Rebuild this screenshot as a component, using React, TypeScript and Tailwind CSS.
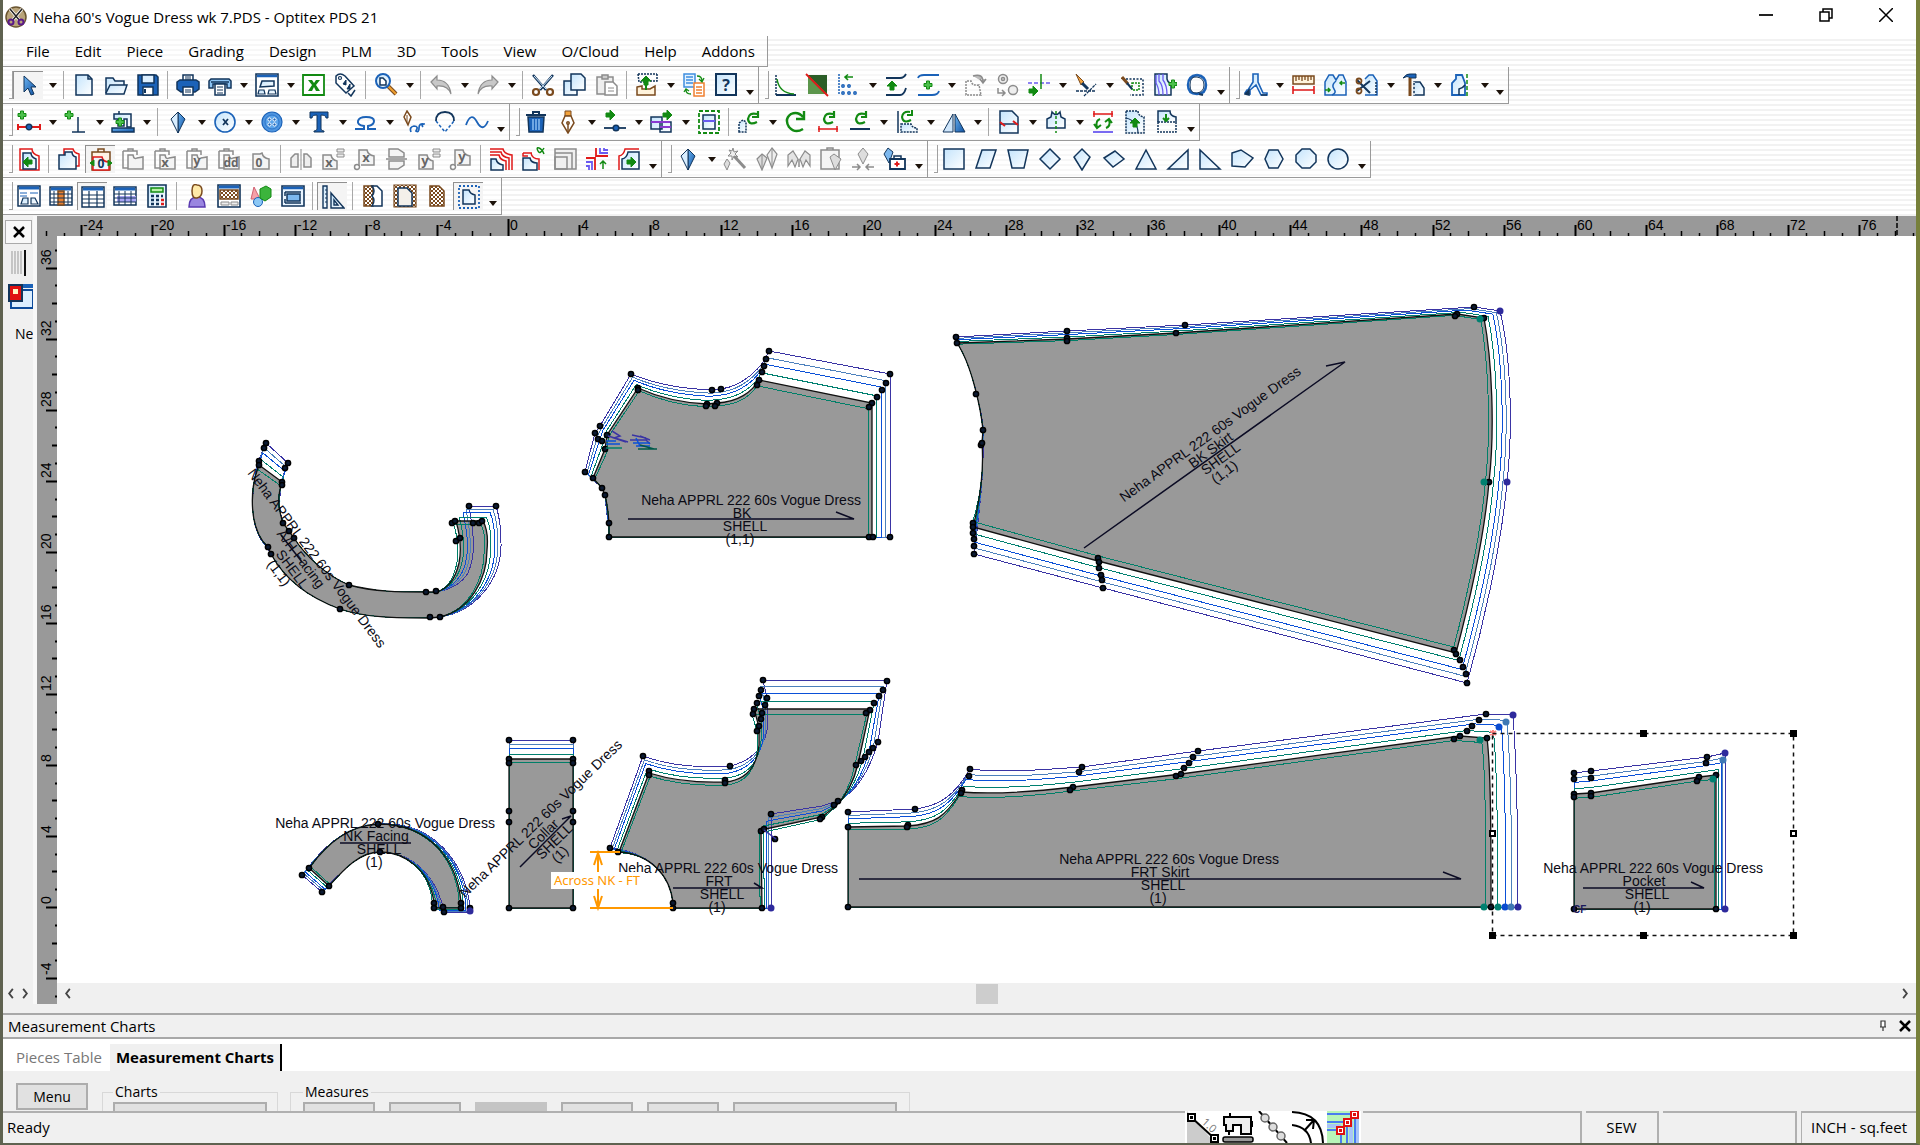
import { useState } from "react"

const N = "#12355b"
const B = "#1b62b8"
const G = "#128a12"
const R = "#e01a1a"
const K = "#8c8c8c"
const W = "#7a4a1e"
const V = "#6a5af0"
const L = "url(#sky)"
const D = "url(#deep)"

// d, stroke, fill, stroke width, dash
type Shape = [string, string?, string?, number?, string?]
// text, x, y, colour, size
type Glyph = [string, number, number, string, number]

const circle = (x: number, y: number, r: number) => `M${x - r} ${y}a${r} ${r} 0 1 0 ${r * 2} 0a${r} ${r} 0 1 0 ${-r * 2} 0z`
const plus = (x: number, y: number) => `M${x - 1.5} ${y - 4}h3v2.5h2.5v3h-2.5v2.5h-3v-2.5h-2.5v-3h2.5z`
const right = (x: number, y: number) => `M${x - 4} ${y - 2}h4v-3l5 5l-5 5v-3h-4z`
const left = (x: number, y: number) => `M${x + 4} ${y - 2}h-4v-3l-5 5l5 5v-3h4z`
const up = (x: number, y: number) => `M${x - 2} ${y + 4}v-4h-3l5 -5l5 5h-3v4z`

const CLIP = "M2 4h14v4M2 4v17h5M7 4V2h5v2"
const FRONT = "M7 8h5q1 5 4 3l6 -1v12H7z"

const icons: Record<string, Shape[]> = {
    pointer: [["M7 2v16l4 -4l3 7l3 -1l-3 -7h5z", N, D, 1]],
    new: [["M4 2h12l4 4v16H4z", N, L], ["M16 2v4h4", N]],
    open: [["M2 20V5h7l2 3h9v4", N, L], ["M2 20l4 -8h17l-3 9H2z", N, L]],
    save: [["M2 2h18l2 2v18H2z", N, B], ["M6 2h12v8H6z", N, "#dcefff"], ["M7 14h10v8H7z", N, "#fff"], ["M9 16v4", N, "none", 2]],
    print: [["M7 9V2h10v7", N, "#fff"], ["M1 9l3 -2h16l3 2v7l-4 3H5l-4 -3z", N, B], ["M7 14h10v8H7z", N, "#fff"], ["M9 17h6M9 19h6M9 4h6M9 6h6", N, "none", 1]],
    plot: [["M1 15V8l2 -2h18l2 2v7h-4v-4H5v4z", N, "#8cc4f4"], ["M3 9h18", N, "none", 1.5], ["M7 11h10v11H7z", N, "#fff"], ["M9 14h6M9 17h6M9 20h6", N, "none", 1]],
    layout: [["M1 1h22v22H1z", N, "#fff", 1.6], ["M2 3h20", B, "none", 2.5], ["M7 8h12v5l-14 1z", N, L], ["M3 21l1 -4h5l1 4zM13 21l1 -4h6l1 4z", N, L, 1.2]],
    excel: [["M1 2h21v20H1z", G, "#fff", 1.8], ["M6 7h4l2 3l2 -3h4l-4 5l4 6h-4l-2 -4l-2 4H6l4 -6z", "none", G]],
    tag: [["M2 3q4 -4 9 0l9 10l-8 7L2 10z", N, "#fff"], [circle(6, 5, 1.5), N, "#fff", 1.2], ["M9 11l3 -4l0 5zM13 16l3 -5l0 5z", N, N, 1], ["M14 20l3 3l4 -6", N, "none", 1.5]],
    zoom: [["M14 13l8 8", W, "none", 4], ["M14 13l8 8", "#f0a030", "none", 2], [circle(9, 8, 7), B, L, 2], ["M6 12V5h3l3 3v4z", N, "#fff"]],
    undo: [["M2 9l6 -6v4q12 0 14 14q-3 -9 -14 -8v3z", K, "#c8c8c8", 1.2]],
    redo: [["M22 9l-6 -6v4q-12 0 -14 14q3 -9 14 -8v3z", K, "#c8c8c8", 1.2]],
    cut: [["M2 2l13 15M22 2L9 17", N, "none", 2.5], ["M3 3l12 13M21 3L9 16", "#cfe6fb", "none", 1], [circle(5, 19, 3), W, "none", 2.2], [circle(19, 19, 3), W, "none", 2.2]],
    copy: [["M1 8h13v14H1z", N, L], ["M8 1h10l4 4v12H8z", N, L]],
    paste: [["M2 4h16v17H2z", K, "#eee"], ["M7 2h6v4H7z", K, "#ccc"], ["M10 9h8l4 4v9H10z", K, "#fff"], ["M13 15h6M13 18h6", K, "none", 1]],
    exchange: [["M3 1h19M3 1l1 8h5M22 1v7h-7", N, "none", 1.5, "2 1"], ["M2 14l5 -1v3h8l5 -3v9H2z", W, "#fff3dc"], [up(11, 8), G, G, 1], ["M11 8v9", G, "none", 2]],
    pages: [["M2 1h11v13H2z", "#3f8fe0", "#e4f3ff"], ["M4 4h7M4 7h7M4 10h7", "#3f8fe0", "none", 1.5], ["M12 10h10v13H12z", "#f08030", "#fff"], ["M14 14h6M14 17h6M14 20h6", "#f08030"], ["M15 3q5 0 5 5M17 6l3 3l2 -4", G, "none", 1.3], ["M9 21q-5 0 -5 -4M2 19l2 -3l3 2", G, "none", 1.3]],
    help: [["M2 1h20v21H2z", N, L, 2]],
    curve: [["M3 2v20", N, "none", 1.5, "2 1"], ["M3 22h20", N, "none", 2], ["M4 6q2 14 17 15", G, "none", 1.5]],
    colour: [["M3 2h19v19H3z", "none", "#5c964c"], ["M3 2h19v19z", "none", "#2c5e28"], ["M1 1l22 22", R, "none", 1.8]],
    points: [["M2 1v21", B, "none", 1.5, "2 1"], ["M16 4H8M11 1.5L8 4l3 3", G, "none", 1.6], [circle(6, 13, 1.2), B], [circle(12, 13, 1.2), B], [circle(6, 20, 1.2), B], [circle(12, 20, 1.2), B], [circle(18, 20, 1.2), B]],
    curveup: [["M2 5h14q4 0 6 -4M2 22h14q4 0 6 -7", N, "none", 1.8], [up(8, 13), G, G, 1]],
    curveadd: [["M2 5q1 -3 6 -3h15M2 22h14q6 0 7 -4", B, "none", 1.8], [plus(12, 12), G, "#4cc04c", 1]],
    rotatepc: [["M3 22V8h5q1 5 8 4l2 10z", K, "none", 1.5, "2 1"], ["M10 3q10 -3 10 6M17 6l3 4l3 -4", K, "#bbb"]],
    spread: [[circle(8, 6, 4.5), K, "#eee"], [circle(8, 6, 1.5), K], [circle(18, 17, 4.5), K, "#eee"], ["M3 15v5h6M7 17l3 3l-3 3", K]],
    extend: [["M1 10h22", V, "none", 1.5, "4 2"], ["M14 1v15", G], [right(6, 18), G, G, 1]],
    brushcurve: [["M2 1l8 8l-3 3z", W, "#f2a23c", 1], ["M8 10l6 6", N, "none", 3], ["M2 18h20M10 23l12 -12", N, "none", 1.3, "3 1"]],
    brushbox: [["M1 4l6 7", W, "#f2a23c", 3], ["M5 6h17v16H9", N, "none", 1.5, "2 1.5"], ["M11 10h7v7h-7z", G, "none", 1.5, "2 1"], ["M6 10l5 6", N, "none", 2]],
    waves: [["M2 1h12v5q1 4 4 4v12H2z", N, L], ["M6 1v7q4 4 4 14M10 1v6q4 5 4 15M3 2v8q3 5 3 12", V, "none", 1.3], [plus(20, 11), G, "#4cc04c", 1]],
    ring: [["M12 2q9 1 9 10t-9 9t-9 -9t9 -10", B, "none", 2.5], ["M12 4q7 1 7 8t-7 8t-7 -8t7 -8", N, "none", 1], ["M14 21l4 1", N, "none", 2]],
    walk: [["M9 9V1h5v8l5 11h4v2h-6l-5 -10l-6 5v4l-5 -1l2 -3h1z", B, L, 1.6], ["M1 21l4 -4v5zM17 22h6", N, N]],
    measure: [["M2 3h21v8H2z", W, "#fff3dc"], ["M5 3v5M8 3v4M11 3v5M14 3v4M17 3v5M20 3v4", W, "none", 1.3], ["M2 17h21M2 13v8M23 13v8", R, "none", 1.6]],
    seamjoin: [["M2 22V9l4 -7h4l3 5l3 -5h4l3 7v13z", B, L], ["M13 8q-5 4 -2 8t-2 6", B], ["M2 17h5M5 15l2 2l-2 2M22 10h-5M19 8l-2 2l2 2", G]],
    cutpc: [["M10 6l4 -4h4l4 6v14H10", B, L], ["M21 9v13", N, "none", 1.5, "2 1"], ["M2 7l13 13M15 8L2 18", N, "none", 2], [circle(4, 8, 2.5), W, "none", 1.8], [circle(4, 18, 2.5), W, "none", 1.8]],
    hammer: [["M1 5q4 -5 8 -4h5v4H9q-4 -3 -8 0z", N, B, 1], ["M8 5v18", W, "none", 3], ["M12 22V9h6l4 6v7z", N, L, 1.5], ["M12 22V9", "#fff", "none", 1.5, "2 2"]],
    half: [["M3 22V10l4 -4V2h6l3 8v12z", B, L, 1.8], ["M18 1v22", G, "none", 1.5, "4 2"], ["M10 22v-6q4 -1 6 -4", N]],

    addpoint: [[plus(5, 5), G, "#4cc04c", 1], ["M1 17h22M1 14v6M23 14v6", R, "none", 2], [circle(12, 17, 2.8), N, B]],
    addperp: [[plus(5, 5), G, "#4cc04c", 1], ["M14 7v15M8 22h13", N]],
    machine: [["M3 4h17v13h-4V9h-3v7H7V9H3zM8 1v3", N, L], ["M1 18h22v4H1z", N, D], [plus(9, 12), G, "#4cc04c", 1]],
    dart: [["M12 2l7 7l-7 14z", N, D, 1], ["M12 2L5 9l7 14z", N, "#d9eeff", 1]],
    xcircle: [[circle(12, 12, 10), B, L, 1.6], ["M10 9l5 6M15 9l-5 6", N, "none", 1.8]],
    button: [[circle(12, 12, 10), B, "#4e95e0", 1.2], [circle(12, 12, 7), "#2c74c8", "#5ca4ea", 1], [circle(9.5, 9.5, 1.6), "#fff", B, 1], [circle(14.5, 9.5, 1.6), "#fff", B, 1], [circle(9.5, 14.5, 1.6), "#fff", B, 1], [circle(14.5, 14.5, 1.6), "#fff", B, 1]],
    text: [["M3 2h18v6h-2q0 -3 -5 -3v14q0 2 3 2v1H7v-1q3 0 3 -2V5Q5 5 5 8H3z", N, B, 1]],
    loop: [["M1 19h9v-3q-7 -1 -6 -5q1 -4 8 -4q8 0 8 4q0 4 -6 5v3h8", B, "none", 2]],
    penloop: [["M6 1l4 6l-3 8l-4 -8z", W, "#fff"], ["M6 5v8", W, "none", 1], ["M10 22q-2 -5 3 -6q5 0 2 5q3 2 3 -3q0 -5 5 -4q-3 1 -1 3", B, "none", 1.7]],
    arc: [["M3 11q0 -9 9 -9q9 0 9 9", N, "none", 1.8], ["M3 11l9 11l9 -11", B, "none", 1.5, "3 2"]],
    wave: [["M1 15q5 -14 11 -3t11 -1", B, "none", 1.8]],
    trash: [["M4 7h16l-1 15H5z", N, B], ["M2 5h20M9 5V2h6v3", N, "none", 2], ["M9 9v11M12 9v11M15 9v11", "#a8d4ff", "none", 1.2]],
    nib: [["M9 1h6v5H9z", W, "#f2a23c", 1], ["M9 6h6l3 7l-6 10l-6 -10z", W, "#fff"], ["M12 22v-8", W], [circle(12, 13, 1.2), W]],
    movepoint: [[right(7, 5), G, G, 1], ["M1 18h22", N, "none", 1.8], [circle(13, 18, 2.8), N, B]],
    movepc: [["M1 7h11v12H1zM10 12h11v10H10z", N, L], ["M1 12h19M10 17h11", "#8a3ad0", "none", 1.8], [right(17, 5), G, G, 1]],
    selpc: [["M2 1h20v22H2z", G, "none", 1.8, "4 2"], ["M6 5h12v14H6z", N, L, 1.5], ["M6 11h12", V, "none", 2]],
    rot1: [["M2 22v-9l4 -3l3 2v10z", N, L, 1.5, "2 1"], ["M20 12q-8 4 -9 -3q1 -7 9 -5M21 1v6h-6", G, "none", 2.2]],
    rot2: [["M19 19q-8 5 -14 -2q-5 -8 2 -13q7 -3 12 3M20 1v8h-8", G, "none", 2.4]],
    rot3: [["M17 12q-8 4 -9 -3q1 -7 9 -5M18 1v6h-5", G, "none", 2.2], ["M2 19h20M3 16v6M21 16v6", R]],
    rot4: [["M17 12q-8 4 -9 -3q1 -7 9 -5M18 1v6h-5", G, "none", 2.2], ["M2 19h20", N, "none", 2]],
    rot5: [["M3 1v22", N], ["M16 10q-8 4 -9 -3q1 -6 8 -5M17 0v5h-5", G, "none", 2], ["M6 14h10q1 4 6 4v4H6z", N, L, 1.5, "2 1"]],
    mirror: [["M11 4v18H1z", N, "#cfe6fb", 1], ["M13 4v18h10z", N, D, 1]],
    split: [["M3 1h12l6 6v16H3z", N, L], ["M3 14h18", N], ["M3 12l5 4M21 15l-5 -4", R, "none", 2]],
    front: [["M3 18V9l4 -2l1 -5q4 5 8 0l1 5l4 2v9z", N, L], ["M12 1v22", G, "none", 1.5, "3 2"]],
    swap: [["M2 4h20M3 1v6M21 1v6", R], ["M9 9q-5 2 -3 8M3 14l3 4l4 -3M15 18q5 -2 3 -8M14 12l4 -3l3 4", G, "none", 2], ["M2 22h20", V, "none", 1.8]],
    allow: [["M3 1h12q0 5 6 6v16H3z", N, L, 1.5, "2 1"], ["M3 8q12 3 12 15", N, "none", 1.2], [up(12, 13), G, G, 1]],
    shrink: [["M3 12V1h12q0 5 6 6v5", N, L], ["M3 12v10h18V12z", N, "none", 1.5, "2 1"], ["M11 4v6M8 8l3 3l3 -3", G, "none", 2]],

    gradein: [["M3 2h12q0 5 7 7v14H3z", R, "#fff"], ["M6 6h8q0 4 5 6v10H6z", N, L], [left(11, 15), G, G, 1]],
    gradecopy: [["M7 2h9q1 4 6 5v12H7z", R, "#fff"], ["M2 8h6v-3h7q0 4 4 5v12H2z", N, L]],
    gradeclip: [["M3 4h18v18H3zM9 4V1h6v3", W, "#fff3e4"], ["M4 9h9q1 5 7 5v8H4z", R, "#eef7ff"], ["M1 15l4 -3v6zM23 15l-4 -3v6z", G, G, 1]],
    clip0: [[CLIP, K], [FRONT, K, "#f4f4f4"]],
    clipx: [[CLIP, K], [FRONT, K, "#f4f4f4"]],
    clipy: [[CLIP, K], [FRONT, K, "#f4f4f4"]],
    clipdd: [[CLIP, K], [FRONT, K, "#f4f4f4"]],
    zero: [["M4 22V7h7l2 -1q1 5 7 6v10z", K, "#f4f4f4"]],
    flipm: [["M2 20v-9l4 -4h3v13zM22 20v-9l-4 -4h-3v13z", K, "#eee"], ["M12 2v21", K, "none", 1]],
    eqx: [["M2 22V8h8q1 5 6 6v8z", K, "#f4f4f4"], ["M16 2h7v3h-7zM16 7h7v3h-7z", K, "#eee", 1]],
    linkx: [["M6 19V3h8q1 5 7 6v9H8", K, "#f4f4f4"], [circle(4, 20, 2.5), K]],
    flipv: [["M4 2h9l6 4v4H4zM4 22h9l6 -4v-4H4zM1 12h21", K, "#f4f4f4"]],
    eqy: [["M2 22V8h8q1 5 6 6v8z", K, "#f4f4f4"], ["M16 2h7v3h-7zM16 7h7v3h-7z", K, "#eee", 1]],
    linky: [["M6 19V3h8q1 5 7 6v9H8", K, "#f4f4f4"], [circle(4, 20, 2.5), K]],
    nest: [["M1 2h13q1 5 9 6v15", R], ["M1 5h11q1 5 8 6v12", R], ["M1 8h9q1 5 7 6v9", R], ["M2 12h5q1 5 7 6v5H2z", N, L]],
    alpha: [["M2 6h9M2 6v3h5M10 6q1 6 8 6v11", R], ["M2 11h7q1 5 7 5v7H2z", N, L], ["M23 1q-4 7 -6 3t1 -3t5 6", G]],
    frame: [["M2 2h21v20H2z", K, "#f0f0f0"], ["M2 6h17v16M2 10h12v12H2z", K]],
    cross: [["M1 15h6v8M1 19h3v4", V, "none", 1.8], ["M1 11h9v12", R, "none", 1.8], ["M11 1v8h12", R, "none", 1.8], ["M15 1v5h8M19 1v2h4", V, "none", 1.8], ["M18 22v-8M15 17l3 -3l3 3", G]],
    gradeout: [["M2 23V9q5 -1 6 -7h14", R, "#fff"], ["M5 22V12q5 -1 6 -7h11v17z", N, L], [right(14, 15), G, G, 1]],
    wand: [["M11 9l11 12", K, "none", 3], ["M10 1l1 4l4 -1l-3 3l3 3l-4 -1l-2 4l0 -4l-4 0l3 -3l-2 -3l3 1z", K, "#eee", 1], ["M4 12l3 4l-3 7l-3 -6z", K, "#ddd", 1]],
    darts2: [["M7 7l5 4l-5 12l-5 -11z", K, "#ddd", 1.2], ["M17 1l5 6l-5 14l-5 -13z", K, "#eee", 1.2], ["M17 2v18M7 8v14", K, "none", 1]],
    darts3: [["M1 19V8l5 -4l5 8l-3 8l-3 -7zM23 19V8l-5 -4l-5 8l3 8l3 -7z", K, "#e4e4e4", 1.2], ["M12 12v8", K]],
    dartclip: [["M2 3h18v19H2zM8 3V1h6v2", K, "#f4f4f4"], ["M15 7l7 5l-6 11l-5 -13z", K, "#ddd", 1]],
    dartclose: [["M12 1l5 6l-5 10l-5 -10z", K, "#ddd", 1], ["M1 20h8M6 17l3 3l-3 3M23 20h-8M18 17l-3 3l3 3", K]],
    dartkit: [["M5 1l5 4l-4 11l-5 -9z", N, "#7db8ee", 1], ["M7 12h15v10H7z", N, "#fff", 1.8], ["M11 12V9h7v3", N], ["M14 14.5v5M11.5 17h5", R, "none", 2]],

    square: [["M2 2h20v20H2z", N, L]],
    para: [["M8 3h14l-6 18H2z", N, L]],
    trap: [["M2 3h20l-4 18H6z", N, L]],
    diamond: [["M12 2l10 10l-10 10l-10 -10z", N, L]],
    kite: [["M12 2l8 8l-8 13l-8 -13z", N, L]],
    diamond2: [["M13 4l9 8l-11 8l-9 -9z", N, L]],
    tri: [["M12 3l10 19H2z", N, L]],
    tri2: [["M22 3v19H2z", N, L]],
    tri3: [["M2 3v19h20z", N, L]],
    penta: [["M2 6l9 -3l12 8l-8 9l-13 -1z", N, L]],
    hexa: [["M7 3h9l5 9l-5 9H7l-4 -9z", N, L]],
    octa: [["M8 2h8l6 6v7l-6 6H8l-6 -6V8z", N, L]],
    oval: [[circle(12, 12, 10), N, L]],

    tbl1: [["M1 2h22v20H1z", N, "#fff"], ["M2 4h20", B, "none", 3], ["M3 9h7M13 9h8M3 12h7", B, "none", 1], ["M4 20l2 -6h5v6zM14 20v-6h4l3 6z", N, L, 1.2]],
    tbl2: [["M1 3h22v18H1z", N, "#fff"], ["M2 5h20", B, "none", 3], ["M9 7h6v14H9z", W, "#e88030"], ["M1 10h22M1 14h22M1 18h22M5 7v14M19 7v14", N, "none", 1]],
    tbl3: [["M1 2h22v20H1z", N, "#fff"], ["M2 4h20", B, "none", 3], ["M1 10h22M1 14h22M1 18h22M8 6v16M16 6v16", N, "none", 1.2]],
    tbl4: [["M1 3h22v18H1z", N, "#fff"], ["M2 5h20", B, "none", 3], ["M4 12h19v6H4z", "none", "#a9a4f4"], ["M1 10h22M1 14h22M1 18h22M6 7v14M12 7v14M18 7v14", N, "none", 1]],
    calc: [["M3 1h18v22H3z", N, L, 1.6], ["M6 4h12v4H6z", G, "#b8f0a8"], ["M6 12h3M11 12h3M16 12h2M6 16h3M11 16h3M6 20h3M11 20h3", N, "none", 2.4], ["M16 16h3M16 20h3", R, "none", 2.4]],
    person: [["M4 23q0 -10 8 -10t8 10z", "#5a3ab0", "#9a86e0"], ["M12 1q5 0 5 6t-5 7t-5 -7t5 -6", W, "#ffe9a8"]],
    fabric: [["M1 1h22v22H1z", N, "#fff", 1.6], ["M2 3h20", B, "none", 3], ["M3 6h18v9H3z", W, "url(#check)"], ["M4 18h8v3H4zM14 18h7v3h-7z", K, "#eee", 1]],
    solids: [["M5 3l6 12H2z", "#d06070", "#f5a0a8", 1], [circle(9, 18, 4.5), B, "#8cc8f5", 1], ["M11 5l6 -3l5 3v8l-6 4l-5 -3z", G, "#3cb43c", 1]],
    shade: [["M1 2h22v20H1z", N, "#eaf5ff", 1.6], ["M2 4h20", B, "none", 2.5], ["M6 10h13v7H6z", N, "#7db8ee", 1.5], ["M4 8h16M4 19h16M4 8v4M4 15v4", N, "none", 1.5]],
    ruler: [["M2 1h4v22H2z", N, L, 1.4], ["M4 5h2M4 9h2M4 13h2M4 17h2", N, "none", 1], ["M10 8l13 15H10zM13 15l4 5h-4z", N, L, 1.4]],
    fill1: [["M3 2h9v20H3z", W, "url(#check)"], ["M11 2h5l5 5v15H11q4 -6 0 -10q4 -5 0 -10z", N, "#fff"]],
    fill2: [["M1 1h22v22H1z", W, "url(#check)", 1.2], ["M5 4h9l5 5v13H5z", N, "#f4f0ea"]],
    fill3: [["M5 2h9l5 5v15H5z", W, "url(#check)"]],
    fill4: [["M2 1h20v22H2z", B, "none", 1.8, "2 2"], ["M6 5h6q1 4 6 5v9H6z", N, L]],
}

const glyphs: Record<string, Glyph> = {
    help: ["?", 12, 18, N, 16],
    gradeclip: ["0", 12, 20, N, 12],
    clipx: ["x", 12, 20, "#666", 13],
    clipy: ["y", 12, 18, "#666", 13],
    clipdd: ["dd", 14, 20, "#666", 12],
    zero: ["0", 10, 20, "#666", 12],
    eqx: ["x", 8, 20, "#666", 13],
    eqy: ["y", 8, 18, "#666", 13],
    linkx: ["x", 13, 15, "#666", 13],
    linky: ["y", 13, 14, "#666", 13],
}

// "v" is a drop-down arrow, "|" a separator, and "!" marks a pressed button
const rows = [
    [
        "pointer! v | new open save | print plot v layout v excel tag | zoom v | undo v redo v | cut copy paste | exchange v pages help",
        "curve colour points v curveup curveadd v rotatepc spread extend v brushcurve v brushbox waves ring",
        "walk v measure seamjoin cutpc v hammer v half v",
    ],
    [
        "addpoint v addperp v machine v | dart v xcircle v button v text v loop v penloop arc wave",
        "trash nib v movepoint v movepc v selpc | rot1 v rot2 rot3 rot4 v rot5 v mirror v | split v front v swap allow shrink",
    ],
    [
        "gradein | gradecopy gradeclip! clip0 clipx clipy clipdd zero | flipm eqx linkx flipv eqy linky | nest alpha frame cross gradeout",
        "dart v wand darts2 darts3 dartclip dartclose dartkit",
        "square para trap diamond kite diamond2 tri tri2 tri3 penta hexa octa oval",
    ],
    ["tbl1 tbl2 tbl3! tbl4 calc | person fabric solids shade | ruler! | fill1 fill2 fill3 fill4!"],
]

const menus = ["File", "Edit", "Piece", "Grading", "Design", "PLM", "3D", "Tools", "View", "O/Cloud", "Help", "Addons"]

function Icon({ name }: { name: string }) {
    const glyph = glyphs[name]

    return <svg viewBox="0 0 24 24" className="size-6 shrink-0" aria-hidden="true">
        {icons[name].map(([d, stroke = N, fill = "none", width = 1.5, dash], i) => (
            <path key={i} d={d} stroke={stroke} fill={fill} strokeWidth={width} strokeDasharray={dash} />
        ))}
        {glyph && <text x={glyph[1]} y={glyph[2]} fill={glyph[3]} fontSize={glyph[4]} fontWeight="bold" textAnchor="middle">{glyph[0]}</text>}
    </svg>
}

function Arrow() {
    return <svg viewBox="0 0 8 5" className="h-[5px] w-2" aria-hidden="true"><path d="M0 0h8l-4 5z" fill="#1c120a" /></svg>
}

function Toolbar({ items }: { items: string }) {
    return <div role="toolbar" className="flex h-[37px] items-stretch border-r border-b border-[#9a9a9a] bg-white/40 pl-1.5">
        <span className="my-1 w-1 border-r border-b border-[#a0a0a0]" />
        {items.split(" ").map((item, i) => {
            if (item === "|") return <span key={i} className="my-1 ml-[3px] mr-1 w-px bg-[#a8a8a8]" />
            if (item === "v") return <button key={i} aria-label="More" className="flex w-[15px] items-center justify-center"><Arrow /></button>

            const name = item.replace("!", "")
            const pressed = item.endsWith("!")

            return <button key={i} aria-label={name} aria-pressed={pressed} className={pressed ? "my-1 mr-0.5 flex w-[30px] items-center justify-center border-l border-t border-[#909090] bg-[#f4f4f4]" : "flex w-8 items-center justify-center"}>
                <Icon name={name} />
            </button>
        })}
        <button aria-label="Toolbar options" className="flex w-4 items-end justify-center pb-2"><Arrow /></button>
    </div>
}

function TopRuler() {
    const units = Array.from({ length: 106 }, (_, i) => i - 26)

    return <svg className="block h-5 w-full bg-[#999]" fontSize="14" aria-hidden="true">
        {units.map((u) => {
            const x = Math.round(471 + u * 17.78)
            const major = u % 4 === 0
            return <g key={u}>
                <path d={`M${x + 0.5} ${u === 0 ? 3 : major ? 9 : u % 2 === 0 ? 15 : 17}V20`} stroke="#000" strokeWidth={major ? 2 : 1.5} />
                {major && <text x={x + 2} y="14">{u}</text>}
            </g>
        })}
        <path d="M1860 0v20" stroke="#000" strokeWidth="1.5" strokeDasharray="5 2" />
    </svg>
}

function SideRuler() {
    const units = Array.from({ length: 43 }, (_, i) => i - 5)

    return <svg className="block h-[768px] w-5 shrink-0 bg-[#999]" fontSize="14" aria-hidden="true">
        {units.map((u) => {
            const y = Math.round(671 - u * 17.76)
            const major = u % 4 === 0
            return <g key={u}>
                <path d={`M${major ? 9 : u % 2 === 0 ? 15 : 18} ${y + 0.5}H20`} stroke="#000" strokeWidth="2" />
                {major && <text transform={`translate(14 ${y - 3}) rotate(-90)`}>{u}</text>}
            </g>
        })}
    </svg>
}

interface Piece {
    base: string
    outer: string
    dots: string
    grain: string
    label: string
    count: string
    at: [number, number, number]
}

const pieces: Piece[] = [
    {
        base: "M259 465 C249 490 249 530 268 547 L271 554 C285 580 310 598 340 609 C365 618 400 618 430 618 L440 617 C470 610 487 580 487 550 C488 540 488 530 483 521 L456 521 C460 535 462 548 459 563 C455 580 448 588 437 592 L426 592 C400 592 375 592 349 585 C325 575 305 555 294 538 L289 531 L283 523 C277 505 278 495 282 482 Z",
        outer: "M266 443 C248 480 248 530 267 547 L271 554 C285 580 310 598 340 609 C365 618 400 618 430 618 L440 617 C475 612 502 580 501 543 C501 530 500 518 496 506 L469 506 C474 535 476 555 468 573 C460 586 448 590 437 592 L426 592 C400 592 375 592 349 585 C325 575 305 555 294 538 L289 531 L283 523 C277 505 280 480 288 463 Z",
        dots: "266 443,264 448,259 461,259 465,288 463,285 468,282 482,282 485,283 523,289 531,294 538,268 547,271 554,349 585,340 609,426 592,436 591,430 617,440 617,469 506,496 506,452 523,455 521,473 523,479 523,482 521,456 541,460 538",
        grain: "M281 535L302 562",
        label: "A/H Facing",
        count: "(1,1)",
        at: [313, 561, 53],
    },
    {
        base: "M638 388 C660 398 685 403 707 404 L717 403 C738 402 752 392 759 380 L872 403 L872 537 L609 537 L609 523 Q608 508 605 495 L602 488 L593 478 L605 449 L607 435 Z",
        outer: "M631 374 C655 384 685 389 712 390 L721 389 C742 386 762 369 769 351 L890 374 L890 537 L609 537 L608 523 Q606 508 605 495 L602 488 L585 472 L595 433 L600 426 Z",
        dots: "631 374,638 388,638 390,712 390,721 389,707 404,706 406,717 403,715 406,769 351,766 359,764 366,762 372,759 380,757 385,890 374,886 383,882 390,877 397,872 403,869 407,890 537,869 537,873 537,600 426,595 433,598 439,602 441,605 449,607 435,585 472,593 478,602 488,605 495,609 523,609 537",
        grain: "M628 519H854L836 512",
        label: "BK",
        count: "(1,1)",
        at: [751, 505, 0],
    },
    {
        base: "M957 343 L1067 339 L1176 333 L1457 314 L1484 318 C1492 360 1495 430 1489 482 C1484 540 1470 600 1456 653 L1098 561 L973 527 C980 500 984 470 982 443 L983 430 C981 410 972 365 957 343 Z",
        outer: "M956 337 L1067 331 L1185 325 L1474 307 L1500 311 C1511 355 1513 430 1507 482 C1501 550 1482 630 1467 683 L1103 588 L974 554 C980 510 984 470 983 443 L984 430 C981 410 972 365 957 343 Z",
        dots: "956 337,957 343,1067 331,1067 338,1067 341,1185 325,1176 333,1474 307,1457 314,1455 316,1484 318,976 394,983 430,981 445,982 443,1489 482,973 523,973 527,973 533,974 539,974 546,974 554,1098 558,1099 562,1099 568,1101 575,1102 580,1103 588,1454 650,1456 654,1460 660,1463 667,1466 674,1467 683",
        grain: "M1084 548L1345 362L1326 366",
        label: "BK Skirt",
        count: "(1,1)",
        at: [1213, 438, -36],
    },
    {
        base: "M309 868 C330 840 350 826 378 824 C430 824 457 860 461 902 L461 908 L434 908 L434 903 C430 870 405 852 380 852 C360 852 345 868 329 886 Z",
        outer: "M302 875 C330 838 350 826 378 824 C435 820 465 865 470 906 L470 912 L444 912 L442 903 C432 870 408 852 380 852 C360 852 345 868 322 892 Z",
        dots: "309 868,302 875,329 886,322 892,378 824,380 852,461 903,461 908,434 903,434 908,444 912,443 907,470 908",
        grain: "M340 843H411",
        label: "NK Facing",
        count: "(1)",
        at: [385, 828, 0],
    },
    {
        base: "M509 759 L573 759 L573 908 L509 908 Z",
        outer: "M509 740 L573 740 L573 908 L509 908 Z",
        dots: "509 740,573 740,509 759,573 759,509 763,573 763,509 811,573 811,509 822,573 822,509 908,573 908",
        grain: "M520 867L571 816L562 819",
        label: "Collar",
        count: "(1)",
        at: [544, 822, -44],
    },
    {
        base: "M649 773 C675 781 700 783 725 782 C748 780 757 765 759 745 L759 727 L754 709 L870 709 L858 764 C853 785 845 797 836 806 L822 817 L761 830 L762 908 L673 908 L673 903 C670 875 650 854 619 852 Z",
        outer: "M643 756 C670 766 700 768 730 766 C748 762 764 750 767 730 L767 698 L763 680 L887 680 L878 742 C868 775 855 792 838 801 L822 806 L771 814 L771 908 L673 908 L673 903 C670 875 650 852 610 848 Z",
        dots: "643 756,649 771,649 775,725 780,725 783,730 766,763 680,761 690,759 696,757 703,754 709,753 714,767 698,765 705,762 713,761 719,759 726,757 731,887 681,883 690,879 696,874 703,870 710,866 713,878 742,873 748,869 752,865 757,861 761,856 765,838 801,834 805,822 817,820 819,771 814,761 831,764 829,775 839,762 908,673 908,673 903,618 852,610 848",
        grain: "M673 888H762L754 883",
        label: "FRT",
        count: "(1)",
        at: [728, 873, 0],
    },
    {
        base: "M848 827 L908 826 C935 824 945 817 961 792 C1000 795 1040 791 1073 787 L1181 774 L1460 736 L1487 738 C1491 770 1491 840 1491 907 L848 907 Z",
        outer: "M848 812 L915 809 C940 806 955 795 970 769 C1000 773 1040 770 1082 767 L1198 751 L1486 714 L1513 715 C1517 770 1518 840 1518 907 L848 907 Z",
        dots: "848 827,848 812,908 825,907 827,915 809,970 769,969 776,962 790,961 793,1082 767,1079 772,1073 787,1070 790,1198 751,1193 757,1189 763,1184 768,1181 774,1176 776,1486 714,1479 720,1472 726,1467 731,1460 736,1454 739,848 907,1487 738,1491 907",
        grain: "M859 879H1461L1443 872",
        label: "FRT Skirt",
        count: "(1)",
        at: [1169, 864, 0],
    },
    {
        base: "M1574 794 L1591 793 L1699 777 L1716 775 L1716 909 L1574 909 Z",
        outer: "M1574 773 L1591 771 L1707 757 L1725 753 L1725 909 L1574 909 Z",
        dots: "1574 773,1574 779,1574 794,1574 797,1591 771,1591 778,1591 793,1591 796,1707 757,1706 763,1699 777,1697 781,1716 775,1574 909,1716 909",
        grain: "M1583 888H1704L1691 882",
        label: "Pocket",
        count: "(1)",
        at: [1653, 873, 0],
    },
]

const grades: [number, string][] = [[1, "#3a34a4"], [0.77, "#4c80bc"], [0.55, "#0a50d8"], [0.25, "#008070"], [-0.2, "#007f68"]]

const colouredDots: [number, number, string][] = [
    [1513, 715, "#2e2a9c"], [1506, 722, "#3f78b4"], [1499, 727, "#0a4cd0"], [1480, 740, "#008070"],
    [1484, 907, "#008070"], [1498, 907, "#008070"], [1505, 907, "#0a4cd0"], [1511, 907, "#3f78b4"], [1518, 907, "#2e2a9c"],
    [1725, 753, "#2e2a9c"], [1723, 760, "#3f78b4"], [1713, 779, "#008070"], [1725, 909, "#2e2a9c"],
    [1500, 311, "#2e2a9c"], [1507, 482, "#2e2a9c"], [1484, 482, "#008070"], [1480, 319, "#008070"],
    [771, 908, "#2e2a9c"], [470, 911, "#2e2a9c"],
]

const handles = [[1492, 935], [1643, 733], [1643, 935], [1793, 733], [1793, 935]]

// moves every number of the base path towards the same number of the outer path
const blend = (base: string, outer: string, t: number) => {
    const target = outer.match(/\d+/g)!.map(Number)
    let i = 0

    return base.replace(/\d+/g, (n) => (Number(n) + (target[i++] - Number(n)) * t).toFixed(1))
}

function PatternPiece({ piece }: { piece: Piece }) {
    const [x, y, angle] = piece.at

    return <g>
        <path d={piece.base} fill="#999" />
        {grades.map(([t, colour]) => (
            <path key={t} d={blend(piece.base, piece.outer, t)} fill="none" stroke={colour} shapeRendering="crispEdges" />
        ))}
        <path d={piece.base} fill="none" stroke="#111" strokeWidth="1.3" />
        <path d={piece.grain} fill="none" stroke="#0b0b24" strokeWidth="1.5" />
        {piece.dots.split(",").map((dot) => {
            const [cx, cy] = dot.split(" ")
            return <circle key={dot} cx={cx} cy={cy} r="2.6" fill="#0b1a33" stroke="#000" strokeWidth="1.5" />
        })}
        <g transform={`translate(${x} ${y}) rotate(${angle})`} textAnchor="middle" fill="#0a0a14">
            <text>Neha APPRL 222 60s Vogue Dress</text>
            <text x="-9" y="13">{piece.label}</text>
            <text x="-6" y="26">SHELL</text>
            <text x="-11" y="39">{piece.count}</text>
        </g>
    </g>
}

function Canvas() {
    return <svg className="block h-[747px] w-full bg-white" fontSize="14" role="img" aria-label="Pattern pieces">
        <g transform="translate(-57 -236)">
            {pieces.map((piece) => <PatternPiece key={piece.label} piece={piece} />)}

            <g fill="none" strokeWidth="1.5">
                <path d="M608 436l20 6M612 431l8 5l-6 2l12 4" stroke="#3a34a4" />
                <path d="M606 444h14M606 441h10" stroke="#0a50d8" />
                <path d="M606 448h16" stroke="#007f68" />
                <path d="M632 435l14 3M630 440h16l4 4M640 436l10 4" stroke="#3a34a4" />
                <path d="M633 443h17M636 446h14M636 438l4 8" stroke="#0a50d8" />
                <path d="M638 449h19M640 445l14 4" stroke="#00594a" />
                <path d="M764 830l12 9" stroke="#3a34a4" />
            </g>

            {colouredDots.map(([x, y, colour]) => <circle key={`${x} ${y}`} cx={x} cy={y} r="3.5" fill={colour} />)}
            <path d="M1493 730v6M1490 731l6 4M1496 731l-6 4" stroke="#ff8080" strokeWidth="2" />
            <text x="1573" y="913" fontSize="10" fontWeight="bold" fill="#1a1a5c">CF</text>

            <g stroke="#ff9800" strokeWidth="2" fill="none">
                <path d="M590 852h30M590 908h83M598 853v54M594 865l4 -12l4 12M594 896l4 12l4 -12" />
                <rect x="551" y="872" width="94" height="17" fill="#fff" stroke="none" />
            </g>
            <text x="597" y="885" fontSize="13" fill="#ff9800" textAnchor="middle" className="font-['Noto_Sans',sans-serif]">Across NK - FT</text>

            <path d="M1492.5 733.5H1793.5V935.5H1492.5z" fill="none" stroke="#111" strokeWidth="1.5" strokeDasharray="4 4" />
            {handles.map(([x, y]) => <rect key={`${x} ${y}`} x={x - 3} y={y - 3} width="7" height="7" />)}
            <rect x="1490" y="831" width="5" height="5" fill="#fff" stroke="#000" strokeWidth="2" />
            <rect x="1791" y="831" width="5" height="5" fill="#fff" stroke="#000" strokeWidth="2" />
        </g>
    </svg>
}

function Chevron({ flip = false }: { flip?: boolean }) {
    return <svg viewBox="0 0 8 12" className="h-[11px] w-2" aria-hidden="true"><path d={flip ? "M2 1l4 5l-4 5" : "M6 1l-4 5l4 5"} fill="none" stroke="#444" strokeWidth="2" /></svg>
}

function Cross() {
    return <svg viewBox="0 0 12 12" className="size-3" aria-hidden="true"><path d="M1 1l10 10M11 1L1 11" stroke="#000" strokeWidth="2.5" /></svg>
}

function StatusIcons() {
    return <div className="flex gap-[3px] bg-white px-0.5">
        <svg viewBox="0 0 32 32" className="size-8" aria-hidden="true">
            <path d="M0 0v32h28z" fill="#ccc" />
            <path d="M4 6l24 22" stroke="#000" strokeWidth="2" />
            <path d="M1 3h7v7H1zM24 24h7v7h-7z" fill="#fff" stroke="#000" strokeWidth="2" />
            <path d="M3 5h3v3H3zM26 26h3v3h-3z" />
            <text x="14" y="12" fontSize="11" fill="#777" transform="rotate(42 14 12)">1.0</text>
        </svg>
        <svg viewBox="0 0 32 32" className="size-8" aria-hidden="true">
            <path d="M2 6h27v17H19v-9H11v6H4v-6H2zM8 2v4M30 10v6M7 20v4" fill="#eee" stroke="#000" strokeWidth="2" />
            <rect x="1" y="26" width="30" height="5" rx="2" fill="#999" stroke="#000" strokeWidth="1.5" />
        </svg>
        <svg viewBox="0 0 32 32" className="size-8" aria-hidden="true">
            <path d="M2 0l28 32" stroke="#000" strokeWidth="2" />
            <g fill="#ddd" stroke="#666" strokeWidth="1.5"><circle cx="8" cy="7" r="4" /><circle cx="16" cy="16" r="4" /><circle cx="24" cy="25" r="4" /></g>
        </svg>
        <svg viewBox="0 0 32 32" className="size-8" aria-hidden="true">
            <path d="M0 1Q30 2 31 32M0 14Q17 16 19 32M12 20l9 -10M14 9l8 0l-1 9" fill="none" stroke="#000" strokeWidth="2" />
        </svg>
        <svg viewBox="0 0 32 32" className="size-8" aria-hidden="true">
            <path d="M0 0h32v32H0z" fill="#b8f5b8" />
            <path d="M0 15h14M24 32V10M30 32V8" stroke="#a8c4f8" strokeWidth="4" />
            <path d="M0 3h26M0 11h18M0 19h12M14 32V22M20 32V14M28 32V6" stroke="#4a7cf0" strokeWidth="2" />
            <path d="M24 0h7v7h-7zM17 8h7v7h-7zM10 16h7v7h-7z" fill="#fff" stroke="#e01010" strokeWidth="2" />
            <path d="M26 2h3v3h-3zM19 10h3v3h-3zM12 18h3v3h-3z" fill="#e01010" />
        </svg>
    </div>
}

export default function App() {
    const [tab, setTab] = useState("Measurement Charts")

    return <div className="border-l-[3px] border-r-4 border-b-2 border-[#5f6250] border-r-[#77803a] bg-[#f0f0f0] font-['Open_Sans','Noto_Sans',sans-serif] text-[15px] text-black">
        <svg className="absolute size-0" aria-hidden="true">
            <defs>
                <linearGradient id="sky" x1="0" y1="0" x2="1" y2="1"><stop offset="0" stopColor="#c4e4fc" /><stop offset="1" stopColor="#fff" /></linearGradient>
                <linearGradient id="deep" x1="0" y1="0" x2="1" y2="1"><stop offset="0" stopColor="#6cb4f2" /><stop offset="1" stopColor="#0d4fa0" /></linearGradient>
                <pattern id="check" width="4" height="4" patternUnits="userSpaceOnUse"><rect width="4" height="4" fill="#fff" /><path d="M0 0h2v2H0zM2 2h2v2H2z" fill="#7a4a1e" /></pattern>
            </defs>
        </svg>

        <header className="flex h-9 items-start bg-white">
            <svg viewBox="0 0 22 22" className="mt-1.5 ml-0.5 size-[22px]" aria-hidden="true">
                <circle cx="11" cy="11" r="10" fill="#b9a47a" stroke="#6a5530" strokeWidth="1.5" />
                <path d="M5 3l10 12M17 3L7 15" stroke="#fff" strokeWidth="3" />
                <path d="M5 3l10 12M17 3L7 15" stroke="#222" strokeWidth="1.5" />
                <circle cx="6" cy="16" r="2.5" fill="none" stroke="#5a1a8a" strokeWidth="2" />
                <circle cx="16" cy="16" r="2.5" fill="none" stroke="#5a1a8a" strokeWidth="2" />
            </svg>
            <h1 className="mt-[7px] ml-1.5 leading-5">Neha 60's Vogue Dress wk 7.PDS - Optitex PDS 21</h1>
            <div className="ml-auto flex">
                <button aria-label="Minimise" className="flex h-[30px] w-[60px] items-center justify-center"><span className="h-0.5 w-3.5 bg-[#222]" /></button>
                <button aria-label="Restore" className="flex h-[30px] w-[60px] items-center justify-center">
                    <svg viewBox="0 0 14 14" className="size-3.5" aria-hidden="true"><path d="M1 4h9v9H1zM4 4V1h9v9h-3" fill="none" stroke="#000" strokeWidth="1.5" /></svg>
                </button>
                <button aria-label="Close" className="flex h-[30px] w-[60px] items-center justify-center">
                    <svg viewBox="0 0 14 14" className="size-3.5" aria-hidden="true"><path d="M0 0l14 14M14 0L0 14" stroke="#000" strokeWidth="1.5" /></svg>
                </button>
            </div>
        </header>

        <div className="bg-[repeating-linear-gradient(to_bottom,#ffffff_0px,#ffffff_3px,#f2f2f2_3px,#f2f2f2_5px)] pb-px">
            <nav className="flex h-[31px] w-fit items-center gap-[25px] border-r border-b border-[#9a9a9a] bg-white/40 pr-3 pl-[23px]">
                {menus.map((menu) => <button key={menu}>{menu}</button>)}
            </nav>
            {rows.map((row, i) => (
                <div key={i} className="flex">
                    {row.map((items) => <Toolbar key={items} items={items} />)}
                </div>
            ))}
        </div>

        <main className="flex font-['Liberation_Sans',Arial,sans-serif]">
            <aside className="flex w-[34px] shrink-0 flex-col items-start gap-1.5 overflow-hidden border-r-4 border-white/50 pt-1 pl-0.5">
                <button aria-label="Close panel" className="flex h-6 w-[27px] items-center justify-center border border-[#aaa] bg-[#f8f8f8]"><Cross /></button>
                <svg viewBox="0 0 26 26" className="size-[26px]" aria-hidden="true"><path d="M7 1v23M10 1v23M13 1v23M16 1v23" stroke="#999" /><path d="M20 0v26" stroke="#111" strokeWidth="2" /></svg>
                <svg viewBox="0 0 28 28" className="size-7" aria-hidden="true">
                    <path d="M6 8h22v18H6z" fill="#dceeff" stroke="#0c4a9a" strokeWidth="2" />
                    <path d="M16 4h12" stroke="#1b62b8" strokeWidth="4" />
                    <path d="M4 3h13v16H4z" fill="#e01010" stroke="#12355b" strokeWidth="2" />
                    <path d="M8 7h5v5H8z" fill="#fff3c0" />
                </svg>
                <span className="pt-2 pl-2.5 font-['Open_Sans',sans-serif] text-sm">Ne</span>
                <div className="mt-auto flex h-[21px] gap-1.5 pl-0.5"><button aria-label="Scroll left"><Chevron /></button><button aria-label="Scroll right"><Chevron flip /></button></div>
            </aside>
            <div className="min-w-0 flex-1">
                <TopRuler />
                <div className="flex">
                    <SideRuler />
                    <div className="min-w-0 flex-1">
                        <Canvas />
                        <div className="flex h-[21px] items-center px-[7px]">
                            <button aria-label="Scroll left"><Chevron /></button>
                            <div className="flex flex-1 justify-center"><span className="h-5 w-[22px] bg-[#cdcdcd]" /></div>
                            <button aria-label="Scroll right"><Chevron flip /></button>
                        </div>
                    </div>
                </div>
            </div>
        </main>

        <section className="mt-[9px]">
            <div className="flex h-[26px] items-center border-y-2 border-[#a8a8a8] px-[5px]">
                <h2>Measurement Charts</h2>
                <button aria-label="Pin" className="mr-3 ml-auto">
                    <svg viewBox="0 0 8 12" className="h-3 w-2" aria-hidden="true"><path d="M2 1h4v6H2zM1 7h6M4 7v4" fill="#fff" stroke="#333" strokeWidth="1.2" /></svg>
                </button>
                <button aria-label="Close"><Cross /></button>
            </div>
            <div role="tablist" className="flex h-8 items-end bg-white pl-[5px]">
                {["Pieces Table", "Measurement Charts"].map((name) => (
                    <button key={name} role="tab" aria-selected={tab === name} onClick={() => setTab(name)} className={tab === name ? "h-[27px] border-r-2 border-black bg-[#f0f0f0] px-1.5 font-bold" : "h-[27px] px-2 text-[#777]"}>{name}</button>
                ))}
            </div>
            <div className="flex h-10 items-start overflow-hidden pt-3 pl-[13px] text-sm">
                <button className="h-[27px] w-[72px] border-2 border-[#adadad] bg-[#e1e1e1]">Menu</button>
                <fieldset className="ml-3.5 h-14 w-[176px] border border-[#d8d8d8] px-2.5">
                    <legend className="px-0.5 leading-[18px]">Charts</legend>
                    <button aria-label="Chart" className="mt-px block h-6 w-full border-2 border-[#adadad] bg-[#e1e1e1]" />
                </fieldset>
                <fieldset className="ml-3 h-14 w-[620px] border border-[#d8d8d8] px-3">
                    <legend className="px-0.5 leading-[18px]">Measures</legend>
                    <div className="mt-px flex gap-3.5">
                        {["Add", "Edit", "Delete", "Copy", "Paste"].map((name) => (
                            <button key={name} aria-label={name} className={name === "Delete" ? "h-6 w-[72px] bg-[#c4c4c4]" : "h-6 w-[72px] border-2 border-[#adadad] bg-[#e1e1e1]"} />
                        ))}
                        <button aria-label="Options" className="h-6 flex-1 border-2 border-[#adadad] bg-[#e1e1e1]" />
                    </div>
                </fieldset>
            </div>
        </section>

        <footer className="flex h-8 items-stretch leading-7">
            <span className="flex-1 border-t-2 border-[#b0b0b0] pl-1">Ready</span>
            <StatusIcons />
            <span className="ml-0.5 w-[219px] border-t-2 border-r-2 border-[#b0b0b0]" />
            <span className="ml-1 w-[73px] border-t-2 border-r-2 border-[#b0b0b0] text-center">SEW</span>
            <span className="ml-1 w-[134px] border-t-2 border-r-2 border-[#b0b0b0]" />
            <span className="ml-1 w-[115px] border-t-2 border-l border-[#b0b0b0] text-center">INCH - sq.feet</span>
        </footer>
    </div>
}
